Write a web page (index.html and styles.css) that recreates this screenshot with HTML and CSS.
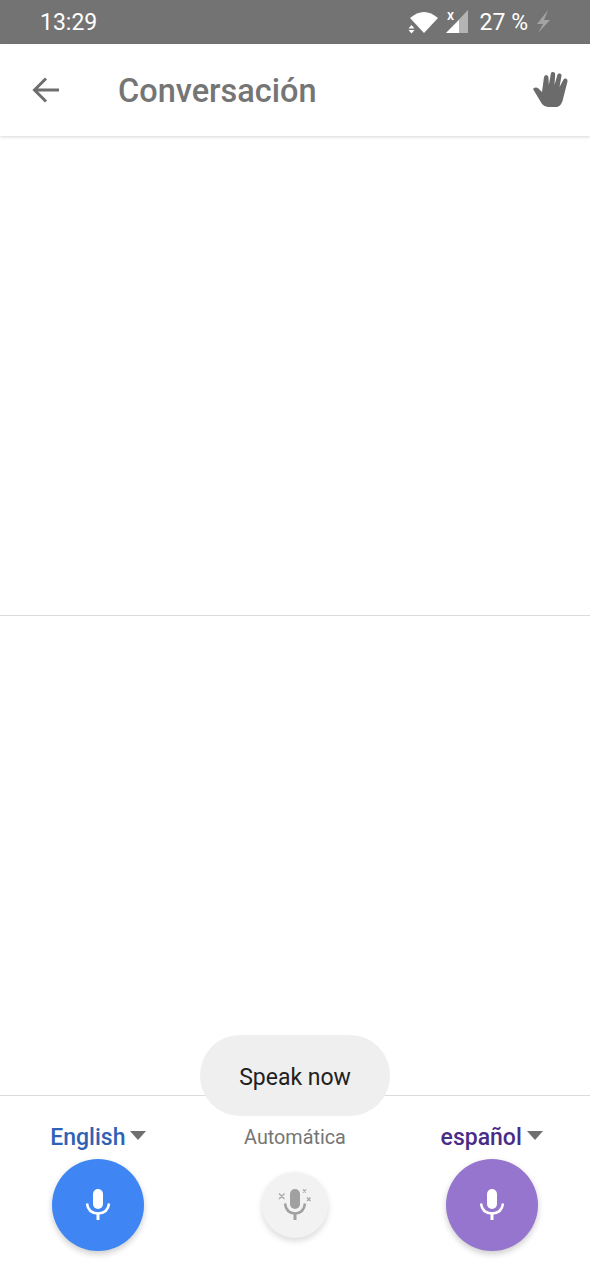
FILE: index.html
```html
<!DOCTYPE html>
<html lang="es">
<head>
	<meta charset="UTF-8">
	<title>Conversación</title>
	<link rel="stylesheet" href="styles.css">
</head>
<body>
	<div id="phone">
		<div class="status">
			<span class="time">13:29</span>
			<div class="status-icons">
				<svg class="wifi" width="32" height="26" viewBox="0 0 32 26">
					<path d="M2 9Q16-3 30 9L16 24Z" fill="#fff"/>
					<path d="M.5 19.500h6L3.500 16ZM.5 21h6L3.500 24.500Z" fill="#fff"/>
				</svg>
				<svg class="signal" width="26" height="30" viewBox="0 0 26 30">
					<text x="3" y="13" class="signal-x">x</text>
					<path d="M24 3V26H2Z" fill="#b4b4b4"/>
					<path d="M15 13V26H2Z" fill="#fff"/>
				</svg>
				<span class="battery">27 %</span>
				<svg class="bolt" width="16" height="26" viewBox="0 0 16 26">
					<path d="M12 1L1 15H7L2 24 14 11H8Z" fill="#a3a3a3"/>
				</svg>
			</div>
		</div>

		<div class="topbar">
			<svg class="back" width="30" height="30" viewBox="0 0 30 30">
				<path d="M28 15H5M15 3.500L3.500 15 15 26.500" fill="none" stroke="#6e6e6e" stroke-width="3"/>
			</svg>
			<h1 class="title">Conversación</h1>
			<svg class="hand" width="38" height="38" viewBox="0 0 38 38">
				<path d="M1 18Q3.500 15.500 6.500 17.500L10 21 12 6Q12.500 4 14.500 4 16.500 4.500 16.500 6.500L16.800 14 19 2Q19.500.5 21.500 1 23.500 1.500 23.200 3.500L22.500 14 25.500 3.500Q26 2 28 2.500 30 3 29.500 5L27.500 16 31.500 8.500Q32.500 7 34 7.500 36 8.500 35.500 10.500L31.500 26Q30 35 25 36L16 36Q12.500 36 10 33Z" fill="#6b6b6b"/>
			</svg>
		</div>

		<div class="panel panel-top"></div>
		<div class="panel panel-bottom"></div>

		<div class="controls">
			<div class="toast">Speak now</div>

			<div class="col">
				<div class="lang lang-en">English<i class="caret"></i></div>
				<div class="mic mic-en">
					<svg width="28" height="34" viewBox="0 0 28 34">
						<rect x="9" y="1" width="10" height="20" rx="5" fill="#fff"/>
						<path d="M3 15.500Q4 25 14 25.500 24 25 25 15.500" fill="none" stroke="#fff" stroke-width="2.500"/>
						<path d="M14 25V32" stroke="#fff" stroke-width="3"/>
					</svg>
				</div>
			</div>

			<div class="col">
				<div class="lang lang-auto">Automática</div>
				<div class="mic mic-auto">
					<svg width="34" height="34" viewBox="0 0 34 34">
						<rect x="12" y="1" width="10" height="20" rx="5" fill="#a0a0a0"/>
						<path d="M7 15.500Q8 25 17 25.500 26 25 27 15.500" fill="none" stroke="#a0a0a0" stroke-width="2.500"/>
						<path d="M17 25V32" stroke="#a0a0a0" stroke-width="3"/>
						<path d="M1 5.500L6.500 11M6.500 5.500L1 11M25 1.500L28 4.500M28 1.500L25 4.500M29 9.500L32.500 13M32.500 9.500L29 13" stroke="#a8a8a8" stroke-width="1.300"/>
					</svg>
				</div>
			</div>

			<div class="col">
				<div class="lang lang-es">español<i class="caret"></i></div>
				<div class="mic mic-es">
					<svg width="28" height="34" viewBox="0 0 28 34">
						<rect x="9" y="1" width="10" height="20" rx="5" fill="#fff"/>
						<path d="M3 15.500Q4 25 14 25.500 24 25 25 15.500" fill="none" stroke="#fff" stroke-width="2.500"/>
						<path d="M14 25V32" stroke="#fff" stroke-width="3"/>
					</svg>
				</div>
			</div>
		</div>
	</div>
</body>
</html>
```

FILE: styles.css
```css
*{margin: 0;padding: 0;box-sizing: border-box;}
body{
	background: #fff;
	font-family: Roboto, "Liberation Sans", sans-serif;
}
#phone{
	width: 590px;
	height: 1280px;
	display: flex;
	flex-direction: column;
	overflow: hidden;
}

/*status bar*/
.status{
	height: 44px;
	background: #737373;
	color: #fff;
	display: flex;
	align-items: center;
	justify-content: space-between;
	padding: 0 38px 0 40px;
	font-size: 23px;
}
.status-icons{
	display: flex;
	align-items: center;
}
.wifi{
	margin-right: 4px;
	flex: none;
}
.signal{
	flex: none;
	overflow: visible;
}
.signal-x{
	font-size: 14px;
	font-weight: 500;
	fill: #fff;
}
.battery{
	margin-left: 10px;
	margin-right: 8px;
}

/*app bar*/
.topbar{
	height: 92px;
	background: #fff;
	display: flex;
	align-items: center;
	padding: 0 20px 0 31px;
	box-shadow: 0 1px 3px rgba(0,0,0,0.16);
	position: relative;
}
.title{
	font-size: 32.500px;
	font-weight: 500;
	color: #757575;
	margin-left: 57px;
	padding-top: 2px;
	flex: 1;
}

/*conversation panels*/
.panel{
	background: #fff;
}
.panel-top{
	height: 480px;
	border-bottom: 1px solid #dcdcdc;
}
.panel-bottom{
	height: 480px;
	border-bottom: 1px solid #dcdcdc;
}

/*bottom controls*/
.controls{
	flex: 1;
	display: grid;
	grid-template-columns: 1fr 1fr 1fr;
	position: relative;
	padding-top: 25px;
}
.col{
	display: flex;
	flex-direction: column;
	align-items: center;
}
.lang{
	height: 30px;
	padding-top: 2px;
	display: flex;
	align-items: center;
	font-size: 23px;
	font-weight: 500;
	white-space: nowrap;
}
.lang-en{
	color: #2f62b5;
}
.lang-es{
	color: #4a2b88;
}
.lang-auto{
	color: #757575;
	font-size: 19.800px;
	font-weight: 400;
}
.caret{
	width: 0;
	height: 0;
	margin-left: 5px;
	margin-bottom: 4px;
	border-left: 8px solid transparent;
	border-right: 8px solid transparent;
	border-top: 9px solid #6f6f6f;
}
.mic{
	border-radius: 50%;
	display: flex;
	align-items: center;
	justify-content: center;
	box-shadow: 0 3px 6px rgba(0,0,0,0.2);
}
.mic-en,.mic-es{
	width: 92px;
	height: 92px;
	margin-top: 8px;
}
.mic-en{
	background: #3f86f4;
}
.mic-es{
	background: #9575cd;
}
.mic-auto{
	width: 66px;
	height: 66px;
	margin-top: 21px;
	background: #f2f2f2;
	box-shadow: 0 3px 6px rgba(0,0,0,0.15);
}

/*toast sits over the divider*/
.toast{
	position: absolute;
	top: -61px;
	left: 200px;
	width: 190px;
	height: 81px;
	padding-top: 4px;
	border-radius: 40px;
	background: #efefef;
	color: #212121;
	font-size: 23px;
	display: flex;
	align-items: center;
	justify-content: center;
}
```
